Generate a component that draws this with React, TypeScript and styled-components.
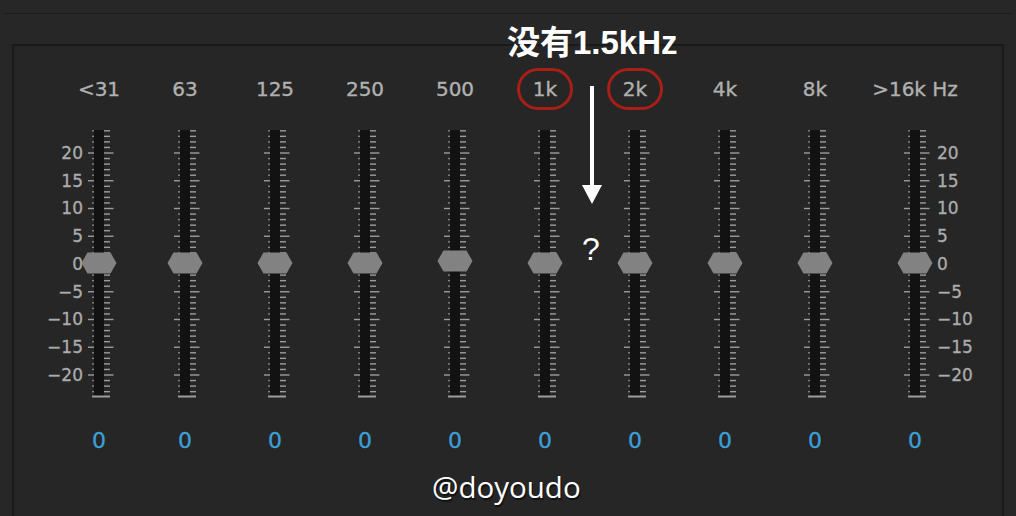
import React from "react";
import styled, { createGlobalStyle } from "styled-components";

const Global = createGlobalStyle`
  html, body { margin: 0; padding: 0; background: #272727; }
  #root { width: 1016px; height: 516px; overflow: hidden; }
`;

const Page = styled.div`
  position: relative;
  width: 1016px;
  height: 516px;
  overflow: hidden;
  background: #272727;
  font-family: "DejaVu Sans", "Liberation Sans", sans-serif;
`;

const TopBar = styled.div`
  height: 13px;
  margin: 0 3px;
  border-bottom: 1px solid #1c1c1c;
`;

const Panel = styled.section`
  margin: 30px 0 0 12px;
  width: 988px;
  height: 480px;
  border: 2px solid #1a1a1a;
  border-bottom: none;
  background: #262626;
`;

const Channels = styled.div`
  display: grid;
  grid-template-columns: 82px repeat(8, 90px) 110px;
  padding: 22px 0 0 44px;
`;

const Channel = styled.div`
  display: flex;
  flex-direction: column;
  align-items: stretch;
  min-width: 0;
`;

const LabelRow = styled.div`
  height: 42px;
  display: flex;
  align-items: center;
  justify-content: center;
  margin-bottom: 18px;
`;

const FreqLabel = styled.span<{ $circled?: boolean }>`
  display: inline-flex;
  align-items: center;
  justify-content: center;
  box-sizing: border-box;
  height: 42px;
  white-space: nowrap;
  font-size: 20px;
  line-height: 42px;
  color: #b0b0b0;
  -webkit-text-stroke: 0.35px #b0b0b0;
  ${(p) =>
    p.$circled
      ? `width: 56px; border: 3px solid #a91e16; border-radius: 21px;`
      : ``}
`;

const FaderRow = styled.div`
  display: grid;
  grid-template-columns: minmax(0, 1fr) 26px minmax(0, 1fr);
  height: 272px;
`;

const Scale = styled.div<{ $side: "left" | "right" }>`
  display: flex;
  flex-direction: column;
  min-width: 0;
  padding-top: 11px;
  ${(p) => (p.$side === "left" ? "padding-right: 3px;" : "padding-left: 9px;")}
`;

const ScaleLabel = styled.div<{ $side: "left" | "right" }>`
  height: 27.75px;
  display: flex;
  align-items: center;
  justify-content: ${(p) => (p.$side === "left" ? "flex-end" : "flex-start")};
  white-space: nowrap;
  font-size: 17px;
  color: #ababab;
  -webkit-text-stroke: 0.3px #ababab;
`;

const FaderSvg = styled.svg`
  overflow: visible;
  display: block;
`;

const Value = styled.div`
  margin-top: 28px;
  height: 26px;
  line-height: 26px;
  text-align: center;
  font-size: 22px;
  color: #3ca0d8;
  -webkit-text-stroke: 0.3px #3ca0d8;
`;

const Annotation = styled.div`
  position: absolute;
  left: 507px;
  top: 27px;
  font-family: "Liberation Sans", "Noto Sans CJK SC", sans-serif;
  font-weight: 700;
  font-size: 33px;
  line-height: 32px;
  color: #ffffff;
  white-space: nowrap;
`;

const Arrow = styled.svg`
  position: absolute;
  left: 580px;
  top: 84px;
`;

const Question = styled.div`
  position: absolute;
  left: 575px;
  top: 233px;
  width: 32px;
  text-align: center;
  font-family: "Liberation Sans", sans-serif;
  font-size: 32px;
  line-height: 32px;
  color: #ffffff;
`;

const Watermark = styled.div`
  position: absolute;
  left: 432px;
  top: 469px;
  font-family: "Open Sans", "Liberation Sans", sans-serif;
  font-size: 29.5px;
  line-height: 36px;
  color: #ffffff;
  text-shadow: 1px 2px 1px rgba(0, 0, 0, 0.6);
`;

const SCALE = ["20", "15", "10", "5", "0", "\u22125", "\u221210", "\u221215", "\u221220"];

const bands = [
  { label: "<31", scale: "left" as const },
  { label: "63" },
  { label: "125" },
  { label: "250" },
  { label: "500", thumb: -2 },
  { label: "1k", circled: true },
  { label: "2k", circled: true },
  { label: "4k" },
  { label: "8k" },
  { label: ">16k Hz", scale: "right" as const },
];

const TICK = "#9c9c9c";

function Fader({ thumb = 0 }: { thumb?: number }) {
  const ticks: React.ReactNode[] = [];
  for (let d = 24; d > -24; d--) {
    const y = 136 - 5.55 * d;
    const major = d % 5 === 0 && Math.abs(d) <= 20;
    ticks.push(
      <g key={d} fill={TICK}>
        <rect x={major ? -11 : -6.8} y={y - 0.7} width={major ? 6 : 1.6} height={1.4} />
        <rect x={5} y={y - 0.7} width={major ? 9.5 : 6} height={1.4} />
      </g>
    );
  }
  const cy = 135 + thumb;
  return (
    <FaderSvg width={26} height={272} viewBox="-13 0 26 272">
      <rect x={-5} y={2} width={10} height={266} fill="#121212" />
      {ticks}
      <rect x={-7} y={267.5} width={18} height={2} fill={TICK} />
      <polygon
        points={`-17.5,${cy} -11.5,${cy - 10.5} 11.5,${cy - 10.5} 17.5,${cy} 11.5,${cy + 10.5} -11.5,${cy + 10.5}`}
        fill="#828282"
      />
    </FaderSvg>
  );
}

export default function App() {
  return (
    <Page>
      <Global />
      <TopBar />
      <Panel>
        <Channels>
          {bands.map((b) => (
            <Channel key={b.label}>
              <LabelRow>
                <FreqLabel $circled={b.circled}>{b.label}</FreqLabel>
              </LabelRow>
              <FaderRow>
                {b.scale === "left" ? (
                  <Scale $side="left">
                    {SCALE.map((s) => (
                      <ScaleLabel key={s} $side="left">{s}</ScaleLabel>
                    ))}
                  </Scale>
                ) : (
                  <div />
                )}
                <Fader thumb={b.thumb} />
                {b.scale === "right" ? (
                  <Scale $side="right">
                    {SCALE.map((s) => (
                      <ScaleLabel key={s} $side="right">{s}</ScaleLabel>
                    ))}
                  </Scale>
                ) : (
                  <div />
                )}
              </FaderRow>
              <Value>0</Value>
            </Channel>
          ))}
        </Channels>
      </Panel>
      <Annotation>没有1.5kHz</Annotation>
      <Arrow width={24} height={122} viewBox="0 0 24 122">
        <rect x={10} y={2} width={4} height={102} fill="#ffffff" />
        <polygon points="2,101 22,101 12,120" fill="#ffffff" />
      </Arrow>
      <Question>?</Question>
      <Watermark>@doyoudo</Watermark>
    </Page>
  );
}
